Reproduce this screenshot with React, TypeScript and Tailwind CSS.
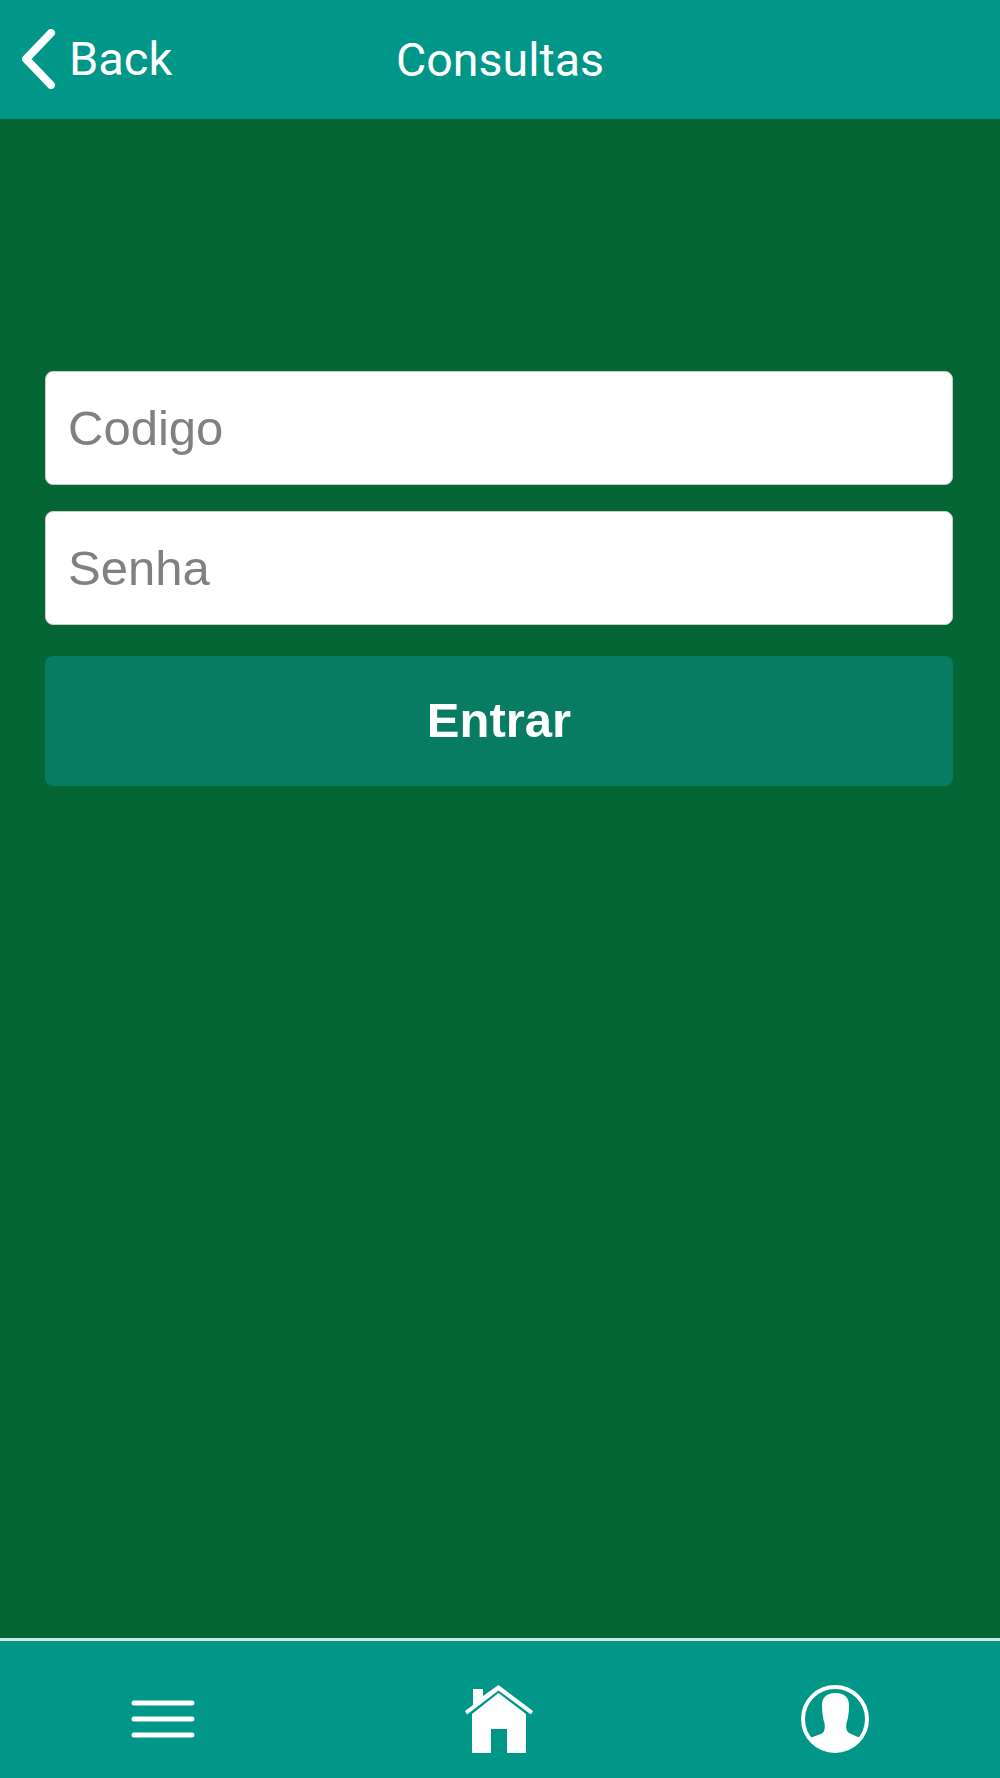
export default function App() {
  return (
    <div className="flex h-[1778px] w-[1000px] flex-col bg-[#036634]">
      <header className="relative flex h-[119px] shrink-0 items-center justify-center bg-[#009688] font-['Roboto',sans-serif] text-white">
        <div className="absolute left-[21px] top-[29px] flex items-center">
          <svg width="35" height="60" viewBox="0 0 35 60" fill="none">
            <path d="M30 4 L5 30 L30 56" stroke="#fff" strokeWidth="8" strokeLinecap="round" strokeLinejoin="round" />
          </svg>
          <span className="ml-[13px] text-[47px] leading-[60px]">Back</span>
        </div>
        <h1 className="text-[46.500px] font-normal leading-[60px]">Consultas</h1>
      </header>
      <main className="flex flex-1 flex-col pl-[45px] pr-[47px] pt-[252px] font-['Liberation_Sans',sans-serif]">
        <input
          placeholder="Codigo"
          className="h-[114px] w-full rounded-[8px] border border-[#ccc] bg-white px-[22px] text-[49px] text-[#555] placeholder:text-[#808080]"
        />
        <input
          placeholder="Senha"
          className="mt-[26px] h-[114px] w-full rounded-[8px] border border-[#ccc] bg-white px-[22px] text-[49px] text-[#555] placeholder:text-[#808080]"
        />
        <button className="mt-[31px] h-[130px] w-full rounded-[8px] bg-[#087b63] text-[49px] font-bold text-white">
          Entrar
        </button>
      </main>
      <footer className="flex h-[140px] shrink-0 items-start justify-between border-t-[3px] border-[#cfe6e2] bg-[#009688] pl-[131px] pr-[131px] pt-[44px]">
        <svg className="mt-[15px]" width="64" height="38" viewBox="0 0 64 38" fill="none" stroke="#fff" strokeWidth="5" strokeLinecap="round">
          <path d="M3 3 H61 M3 19 H61 M3 35 H61" />
        </svg>
        <svg className="ml-[2px]" width="68" height="68" viewBox="0 0 68 68" fill="#fff">
          <path d="M8 4 H18 V11 L33.500 0 L68 26 L66 29.500 L33.500 5.500 L2 29.500 L0 26 L8 20 Z" />
          <path d="M33.500 8 L61 29 V68 H42 V44 H26 V68 H7 V29 Z" />
        </svg>
        <svg width="68" height="68" viewBox="0 0 68 68">
          <circle cx="34" cy="34" r="32" fill="none" stroke="#fff" strokeWidth="4" />
          <path d="M34.500 8 C44 8 48 13 48 20 C48 28 47 34 45.500 38 C45 42 45 46 48 48 L59 53 A32 32 0 0 1 9 53 L21 48.500 C24 47 24 42 23.500 38 C22 34 21 28 21 20 C21 13 25 8 34.500 8 Z" fill="#fff" />
        </svg>
      </footer>
    </div>
  );
}
